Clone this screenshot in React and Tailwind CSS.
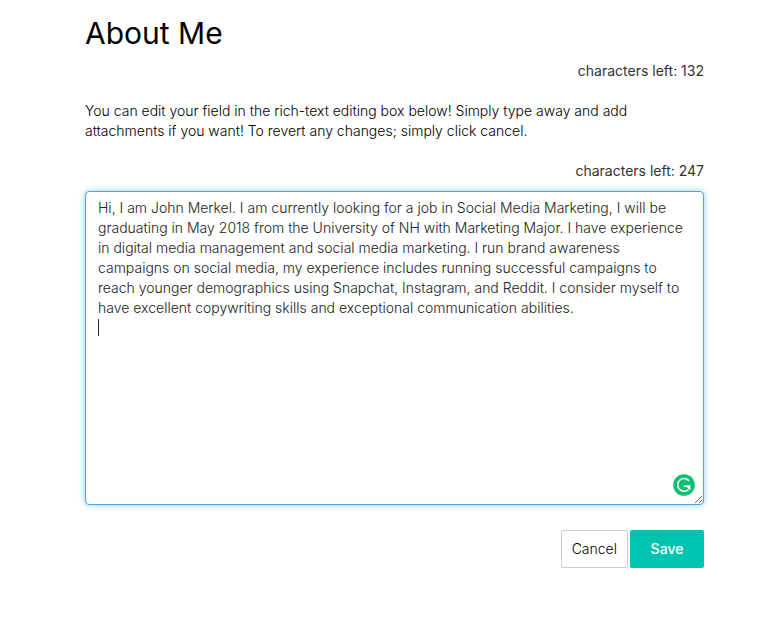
import React, { useState } from 'react';

const initialBio = `Hi, I am John Merkel. I am currently looking for a job in Social Media Marketing, I will be graduating in May 2018 from the University of NH with Marketing Major. I have experience in digital media management and social media marketing. I run brand awareness campaigns on social media, my experience includes running successful campaigns to reach younger demographics using Snapchat, Instagram, and Reddit. I consider myself to have excellent copywriting skills and exceptional communication abilities.
`;

function GrammarBadge() {
  return (
    <svg viewBox="0 0 22 22" className="w-[22px] h-[22px]" fill="none" aria-hidden="true">
      <circle cx="11" cy="11" r="10.8" fill="#0cbf73" />
      <path
        d="M15.6 6.4A6.4 6.4 0 1 0 15 16"
        stroke="#fff"
        strokeWidth="1.5"
        strokeLinecap="round"
      />
      <path d="M11.4 12.2H16.4" stroke="#fff" strokeWidth="1.5" strokeLinecap="round" />
      <path d="M12.8 12L17.4 11.5V16.6Z" fill="#fff" />
    </svg>
  );
}

export default function App() {
  const [bio, setBio] = useState(initialBio);
  const [touched, setTouched] = useState(false);

  return (
    <main className="min-h-screen bg-white pt-3 pb-14 pl-[85px] pr-14 font-['Inter',sans-serif] text-sm leading-5 font-light text-black">
      <h1 className="text-[30px] leading-[42px] font-normal text-black">About Me</h1>

      <p className="mt-[7px] text-right font-normal text-[#333]">characters left: 132</p>

      <p className="mt-5">
        You can edit your field in the rich-text editing box below! Simply type away and add
        attachments if you want! To revert any changes; simply click cancel.
      </p>

      <form onSubmit={(e) => e.preventDefault()}>
        <label htmlFor="bio" className="mt-5 block text-right font-normal text-[#333]">
          characters left: 247
        </label>

        {/* Editor */}
        <div className="relative mt-[10px]">
          <textarea
            id="bio"
            value={bio}
            spellCheck={false}
            onFocus={() => setTouched(true)}
            onChange={(e) => setBio(e.target.value)}
            className="block h-[314px] w-full resize-y rounded border border-[#4fa8e8] bg-white px-3 py-[6px] text-[#222] shadow-[0_0_6px_rgba(79,168,232,0.6)] outline-none"
          />
          {!touched && (
            <span className="absolute left-[13px] top-[128px] h-[17px] w-px bg-[#333]" />
          )}
          <span className="absolute bottom-[9px] right-[9px]">
            <GrammarBadge />
          </span>
        </div>

        {/* Actions */}
        <div className="mt-[25px] flex justify-end gap-[2px]">
          <button
            type="button"
            className="h-[38px] rounded-xs border border-[#ccc] bg-white px-[10px] text-black"
            onClick={() => setBio(initialBio)}
          >
            Cancel
          </button>
          <button
            type="submit"
            className="h-[38px] w-[74px] rounded-xs bg-[#00c4b0] font-medium text-white"
          >
            Save
          </button>
        </div>
      </form>
    </main>
  );
}
